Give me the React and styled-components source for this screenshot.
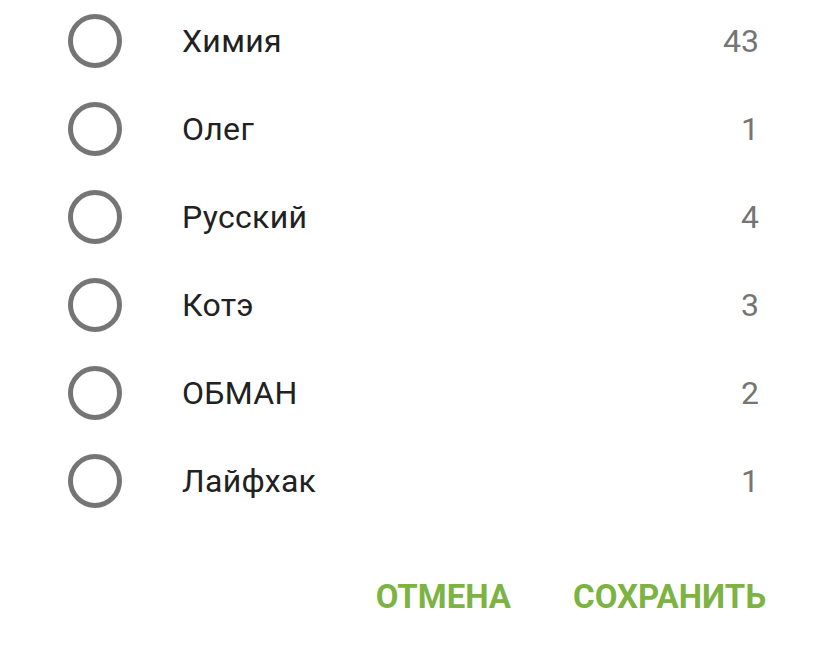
import React from "react";
import styled, { createGlobalStyle } from "styled-components";

const GlobalStyle = createGlobalStyle`
  html, body {
    margin: 0;
    padding: 0;
    background: #ffffff;
    font-family: Roboto, "Noto Sans", sans-serif;
  }
`;

const Dialog = styled.div`
  width: 815px;
  height: 666px;
  background: #ffffff;
  overflow: hidden;
`;

const List = styled.ul`
  list-style: none;
  margin: -3px 0 0 0;
  padding: 0;
`;

const Row = styled.li`
  height: 88px;
  display: flex;
  align-items: center;
  padding: 0 56px 0 68px;
`;

const Radio = styled.span`
  width: 54px;
  height: 54px;
  box-sizing: border-box;
  border: 5px solid #757575;
  border-radius: 50%;
  flex-shrink: 0;
`;

const Label = styled.span`
  flex: 1;
  margin-left: 60px;
  font-size: 32px;
  letter-spacing: 0.3px;
  line-height: 1;
  color: #212121;
`;

const Count = styled.span`
  font-size: 32px;
  line-height: 1;
  color: #757575;
`;

const Actions = styled.div`
  display: flex;
  justify-content: flex-end;
  gap: 62px;
  padding: 55px 49px 0 0;
`;

const Action = styled.button`
  border: none;
  background: none;
  padding: 0;
  font-family: Roboto, "Noto Sans", sans-serif;
  font-weight: 700;
  font-size: 33px;
  line-height: 1;
  color: #7cb342;
  cursor: pointer;
`;

const tags = [
  { name: "Химия", count: 43 },
  { name: "Олег", count: 1 },
  { name: "Русский", count: 4 },
  { name: "Котэ", count: 3 },
  { name: "ОБМАН", count: 2 },
  { name: "Лайфхак", count: 1 },
];

export default function App() {
  return (
    <Dialog>
      <GlobalStyle />
      <List>
        {tags.map((t) => (
          <Row key={t.name}>
            <Radio />
            <Label>{t.name}</Label>
            <Count>{t.count}</Count>
          </Row>
        ))}
      </List>
      <Actions>
        <Action>ОТМЕНА</Action>
        <Action>СОХРАНИТЬ</Action>
      </Actions>
    </Dialog>
  );
}
